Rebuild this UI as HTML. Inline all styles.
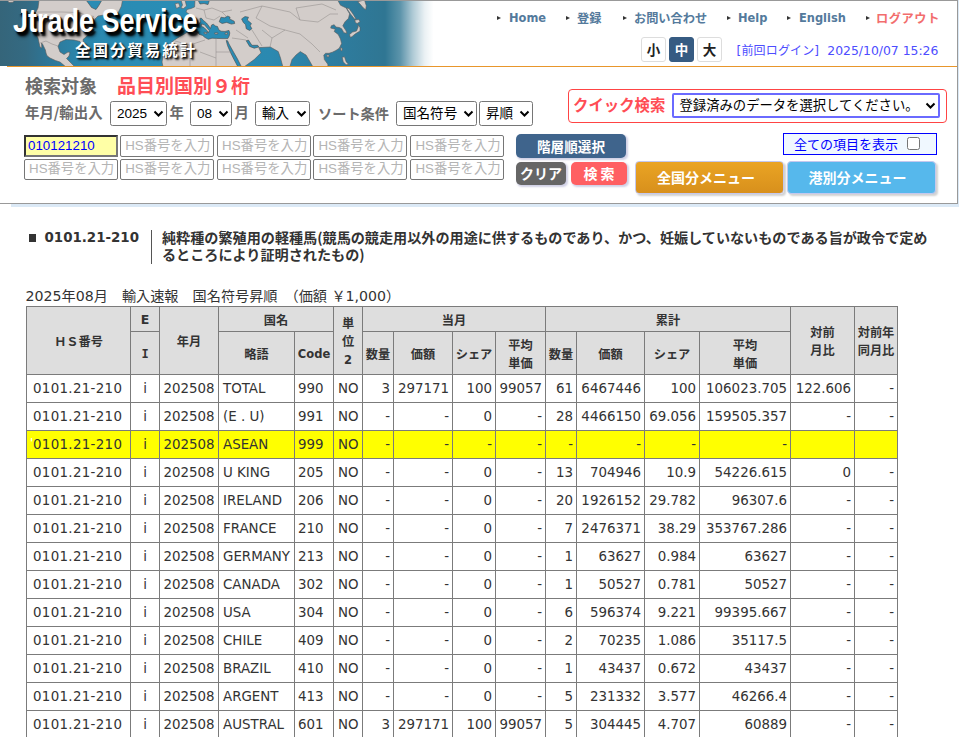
<!DOCTYPE html>
<html lang="ja">
<head>
<meta charset="utf-8">
<title>Jtrade Service 全国分貿易統計</title>
<style>
html,body{margin:0;padding:0;}
body{width:959px;height:737px;overflow:hidden;position:relative;background:#fff;
 font-family:"DejaVu Sans","Noto Sans CJK JP",sans-serif;font-size:14px;color:#333;}
.abs{position:absolute;}
#bluebg{left:11px;top:0;width:948px;height:207px;background:#dbe9f6;}
#hdr{left:0;top:0;width:957px;height:202px;background:#fff;border-top:1px solid #999;border-right:1px solid #999;border-bottom:1px solid #999;}
#banner{left:0;top:1px;width:436px;height:65px;overflow:hidden;}
#oline{left:7px;top:66px;width:950px;height:1px;background:#e8962c;}
.logo1{left:13px;top:.8px;font-family:"Liberation Sans",sans-serif;font-weight:bold;font-size:33px;line-height:38px;color:#fff;white-space:nowrap;
 transform:scaleX(.818);transform-origin:0 0;text-shadow:2px 2px 1px rgba(0,0,0,.9),3.5px 3.5px 2px rgba(0,0,0,.9),4.5px 4.5px 4px rgba(0,0,0,.55);letter-spacing:0;}
.logo2{left:75px;top:37.5px;font-family:"Noto Sans CJK JP",sans-serif;font-weight:bold;font-size:15.5px;line-height:20px;color:#fff;white-space:nowrap;letter-spacing:1.95px;
 text-shadow:2px 2px 2px rgba(0,0,0,.9),1px 1px 1px rgba(0,0,0,.7);}
.nav{top:10px;height:16px;line-height:16px;font-size:12px;font-weight:bold;color:#547a9c;white-space:nowrap;}
.nav.lat{font-family:"DejaVu Sans Condensed","DejaVu Sans",sans-serif;font-size:12.7px;}
.nav.jp{font-family:"Noto Sans CJK JP",sans-serif;font-size:12.2px;}
.tri{width:0;height:0;border-left:4px solid #333;border-top:2.5px solid transparent;border-bottom:2.5px solid transparent;top:15.6px;}
.fs{top:37px;width:23px;height:23px;border:1px solid #ddd;border-radius:3px;background:#fff;color:#222;font-family:"Noto Sans CJK JP",sans-serif;font-weight:bold;font-size:13.5px;line-height:23px;text-align:center;}
.fs.on{background:#365b82;border-color:#365b82;color:#fff;}
.login{left:736.6px;top:42.3px;font-size:12px;line-height:18px;color:#4d4dff;white-space:nowrap;font-family:"DejaVu Sans","Noto Sans CJK JP",sans-serif;}
.lbl{font-family:"Noto Sans CJK JP",sans-serif;font-weight:bold;color:#6b6b6b;white-space:nowrap;}
.sel{box-sizing:border-box;height:25px;top:101px;border:1px solid #767676;border-radius:2.5px;background:#fff;font-family:"Liberation Sans","Noto Sans CJK JP",sans-serif;font-size:13.55px;line-height:23px;color:#000;white-space:nowrap;padding-left:6px;}
.sel svg{position:absolute;right:2.5px;top:7.5px;}
.inp{box-sizing:border-box;width:94px;height:22px;border:1px solid #767676;border-radius:2px;background:#fff;font-family:"Liberation Sans","Noto Sans CJK JP",sans-serif;font-size:13.33px;line-height:19px;color:#b4b4b4;padding-left:4px;white-space:nowrap;overflow:hidden;}
.inp.on{border:2px solid #333;border-right-color:#777;border-bottom-color:#777;border-radius:0;background:#ffffa6;color:#0000ff;padding-left:2px;line-height:17px;}
.btn{box-sizing:border-box;border-radius:5px;color:#fff;font-family:"Noto Sans CJK JP",sans-serif;font-weight:bold;font-size:14px;text-align:center;white-space:nowrap;box-shadow:1.5px 1.5px 2px rgba(120,120,180,.35);}
.big{box-sizing:border-box;top:161px;width:149px;height:33px;padding-right:7px;border:1px solid #c4c8ee;border-radius:4px;color:#fff;font-family:"Noto Sans CJK JP",sans-serif;font-weight:bold;font-size:14px;line-height:31px;text-align:center;box-shadow:2px 2px 2px rgba(0,0,0,.18);}
#title{left:28px;top:228px;}
table{border-collapse:collapse;table-layout:fixed;position:absolute;left:26px;top:306px;width:872px;}
th,td{border:1px solid #7b7b7b;padding:0;overflow:hidden;white-space:nowrap;}
th{background:#dedede;font-family:"Noto Sans CJK JP",sans-serif;font-weight:bold;font-size:12.2px;line-height:18px;color:#333;text-align:center;padding-top:1px;}
th .lt{font-family:"DejaVu Sans",sans-serif;font-size:11.5px;}
th .lt.e{font-size:12.5px;}
th .sf{font-family:"DejaVu Sans Mono",monospace;font-size:12px;}
td{height:27px;font-family:"DejaVu Sans",sans-serif;font-size:13.4px;line-height:27px;text-align:right;padding-right:3px;color:#333;background:#fff;}
td.l{text-align:left;padding-left:4px;padding-right:0;}
td.c{text-align:center;padding:0;}
td.cd{padding-left:3px;}
td.hs{padding-left:6px;letter-spacing:.32px;position:relative;}
td.hs .ap{position:absolute;left:3px;top:-1px;color:#fff;letter-spacing:0;font-size:12px;}
tr.hl td{background:#ffff00;}
</style>
</head>
<body>
<div class="abs" id="bluebg"></div>
<div class="abs" id="hdr"></div>
<div class="abs" id="banner">
<!--MAPSTART-->
<svg class="abs" style="left:0;top:0" width="436" height="65" viewBox="0 1 436 65">
<defs>
<linearGradient id="sea" x1="0" y1="0" x2="436" y2="0" gradientUnits="userSpaceOnUse">
<stop offset="0" stop-color="#35657a"/><stop offset=".06" stop-color="#346a82"/><stop offset=".105" stop-color="#2e7595"/><stop offset=".17" stop-color="#2b83a8"/><stop offset=".26" stop-color="#2a8bb3"/><stop offset=".38" stop-color="#2a8db5"/><stop offset=".62" stop-color="#2b89b0"/><stop offset=".78" stop-color="#2e7c9e"/><stop offset=".88" stop-color="#2f7693"/><stop offset="1" stop-color="#2f7693"/>
</linearGradient>
<linearGradient id="fade" x1="385" y1="0" x2="436" y2="0" gradientUnits="userSpaceOnUse">
<stop offset="0" stop-color="#fff" stop-opacity="0"/><stop offset=".3" stop-color="#fff" stop-opacity=".22"/><stop offset=".55" stop-color="#fff" stop-opacity=".62"/><stop offset=".78" stop-color="#fff" stop-opacity=".9"/><stop offset=".95" stop-color="#fff" stop-opacity="1"/><stop offset="1" stop-color="#fff" stop-opacity="1"/>
</linearGradient>
</defs>
<rect x="0" y="1" width="436" height="65" fill="url(#sea)"/>
<g fill="#d3cdca" stroke="#5a5a5a" stroke-width=".6" stroke-linejoin="round">
<!-- North America -->
<path d="M39 0 L122.5 0 L121.5 6 L118 13 L112 15.5 L104 15 L98 16 L95 19 L93.5 25 L91 31 L87 36 L83 39.5 L84 45 L82.5 47 L80 41.5 L74 40 L66 39.5 L60 42 L58 46.5 L60 52 L64 54.5 L68 52 L70 52.5 L69 56 L66.5 58.5 L70 62 L75 67 L66 67 L60 62 L55.4 60.5 L50 58 L47 55.7 L46 53 L45.4 50 L42.5 44 L41.5 43 L41.8 48 L40 47 L38 38 L36 34 L35 30 L34 22 L35 14 L38 8 Z"/>
<path d="M7 0 L15 0 L13 2.2 L9 2.5 Z"/>
<!-- Cuba -->
<path d="M80 50 L86 49.5 L91 52 L86 52 Z"/>
<!-- Ireland / UK -->
<path d="M175 3.8 L178.5 3 L180 6.5 L176.5 8.5 Z"/>
<path d="M181 0 L185 0 L186.5 6 L183.5 8.5 L181 8 L182.5 5 Z"/>
<!-- Eurasia + Africa -->
<path d="M195 0 L337.6 0 L340.5 5.2 L346.2 8 L349.6 13.8 L348.5 18.3 L345 21.8 L342.8 25.8 L346.2 31 L346.8 33.3 L343.9 32.7 L341.6 28.7 L339.3 27.5 L335.9 27 L334.2 24.7 L331.3 25.8 L330.7 28.1 L335.3 29.2 L334.2 31.5 L338.2 34.4 L340.5 39 L341.6 43.6 L339.3 48.2 L335.9 50.5 L332.4 52.2 L329 53.3 L325.6 53.3 L323.8 55 L324.4 59.6 L327.8 64.2 L328 67 L313 67 L309 60 L306 55 L300.3 51.6 L296 55 L292 59.6 L289.8 67 L282.9 67 L280.5 58 L278.3 51.6 L270.3 47 L258.8 47.6 L261.1 52.8 L254.2 59.6 L243.9 67 L163 67 L162 62 L163 56 L164.5 51.6 L167 47 L170 43.6 L174.5 40 L179.5 36.7 L186 33 L191 30 L189.5 28 L187 27 L186 21 L190 18.5 L190.5 15 L186 12 L187 9.5 L191 8.5 L194.6 7 Z"/>
<!-- Sakhalin, Hokkaido, Honshu, Taiwan, Hainan, Luzon -->
<path d="M357.7 1.7 L364.5 0 L366.3 5.7 L365.7 9.7 L363.4 8 L360 4 Z"/>
<path d="M346.5 8 L349 8.5 L353 14 L356 19 L354.5 19 L350.5 14 Z"/>
<path d="M354.8 20 L358.8 19.5 L360 21.8 L357.1 23.5 L355.4 22.4 Z"/>
<path d="M349.6 34.4 L352.5 32.1 L356.5 31 L358.2 27 L357.7 24.7 L360 27.5 L360 31 L355.4 33.8 L351.9 36.7 L350.2 37.3 Z"/>
<path d="M340.5 47.6 L342.2 48.2 L342.2 50.5 L341 51 Z"/>
<path d="M326.7 55 L329 55 L329 56.8 L326.9 56.8 Z"/>
<path d="M342.2 57.3 L344.5 56.8 L346.2 61.9 L348.5 64.2 L346.2 64.8 L343.3 61.9 Z"/>
</g>
<g fill="#2a8cb4" stroke="#4a4a4a" stroke-width=".6" stroke-linejoin="round">
<path d="M86 0 L89 4 L91.5 7.5 L96 9.5 L98.5 6 L102 0 Z"/>
<!-- Baltic, Mediterranean, Black Sea, Caspian, Red Sea, Persian Gulf -->
<path d="M198 0 L209.5 0 L208 4.6 L204 3.5 L200 4 Z"/>
<path d="M189.5 28.5 L192 25.5 L196 24 L199 24.5 L200.5 21.5 L199.8 18.6 L201.2 18 L203.5 20.5 L206.5 23 L208.8 26 L210.5 28.5 L211.5 25 L213.2 24.2 L215.5 26 L217.5 26.5 L218.8 29.8 L221 31.2 L225 31.4 L229 30.4 L229.8 33 L229.2 36 L227.8 38.6 L222 38.6 L216.4 38.4 L212 38.2 L208.3 39.3 L205 37.5 L202.6 35.5 L199 34.2 L198 32.2 L195 31.5 L191.5 30.5 Z"/>
<path d="M201.5 24 L204.5 24.8 L207.5 28.5 L209.3 30.6 L208.3 32.8 L206.8 30.3 L204 27.5 L201.3 26.3 Z" fill="#d3cdca"/>
<path d="M204 32.3 L207 32.5 L206.5 34 L204.3 33.6 Z" fill="#d3cdca"/><path d="M214.5 33 L217.5 32.7 L218 33.8 L215 34.2 Z" fill="#d3cdca"/><path d="M225 33 L227.5 32.7 L227.3 34.2 L225.2 34.3 Z" fill="#d3cdca"/>
<path d="M219.2 21.8 L221 17.2 L224.4 17.8 L227.8 16 L230.1 17.2 L229.6 18.9 L234.2 21.2 L234.7 23.5 L231.3 24.1 L226.7 22.4 L222.1 23.5 Z"/>
<path d="M241.6 18.9 L245 16.6 L248.5 17.2 L247.3 20 L251.4 23.5 L250.2 25.8 L251.9 28.7 L249.6 30.4 L246.2 28.7 L245.6 24.7 L243.3 22.4 Z"/>
<path d="M226.2 40.5 L227.6 40.8 L229 44 L233.5 52 L237.5 59 L241.5 67 L238 67 L234 59.5 L230.5 52.5 L227.5 45.5 Z"/>
<path d="M246.2 40.7 L248.5 40.1 L251.9 45.3 L257.7 45.3 L258.8 47 L254.2 48.2 L249.6 46.4 Z"/>
</g>
<g fill="none" stroke="#8a8684" stroke-width=".5">
<!-- a few country borders -->
<path d="M37 12 L62 12 L78 12.5 L86 15 L94 16.5"/><path d="M40 43 L46 41 L52 44 L58 46"/>
<path d="M175 41 L190 45 L190 66"/><path d="M190 45 L205 40"/><path d="M216 38.5 L216 66"/><path d="M216 52 L232 52"/><path d="M200 52 L216 58"/>
<path d="M232 38 L246 40"/><path d="M236 30 L248 38"/><path d="M252 30 L262 46"/><path d="M262 30 L272 38 L270 47"/><path d="M272 38 L285 30 L300 34 L312 44 L320 52"/>
<path d="M240 12 L262 6 L290 12 L300 20 L318 22 L330 14 L338 14"/><path d="M262 6 L256 18 L270 26 L285 30"/><path d="M300 20 L296 8 L322 4 L336 10"/>
<path d="M196 8 L204 10 L212 8 L222 12 L232 10"/><path d="M204 10 L206 18 L214 20 L220 16"/><path d="M222 12 L226 16"/>
</g>
<rect x="385" y="1" width="51" height="65" fill="url(#fade)"/>
</svg>
<!--MAPEND-->
<div class="abs logo1"><span style="display:inline-block;clip-path:polygon(9.9px -5px,60px -5px,60px 60px,-10px 60px,-10px 12.5px,9.9px 12.5px)">J</span><span style="position:relative;z-index:2">trade Service</span></div>
<div class="abs logo2">全国分貿易統計</div>
</div>
<div class="abs" id="oline"></div>

<!-- top navigation -->
<div class="abs tri" style="left:497px"></div><div class="abs nav lat" style="left:509px">Home</div>
<div class="abs tri" style="left:566px"></div><div class="abs nav jp" style="left:577px">登録</div>
<div class="abs tri" style="left:623px"></div><div class="abs nav jp" style="left:634px">お問い合わせ</div>
<div class="abs tri" style="left:727px"></div><div class="abs nav lat" style="left:738px">Help</div>
<div class="abs tri" style="left:787px"></div><div class="abs nav lat" style="left:799px">English</div>
<div class="abs tri" style="left:866px"></div><div class="abs nav jp" style="left:876px;color:#f26d6d;letter-spacing:.6px">ログアウト</div>

<div class="abs fs" style="left:641px">小</div>
<div class="abs fs on" style="left:669px">中</div>
<div class="abs fs" style="left:697px">大</div>
<div class="abs login" style="letter-spacing:.15px">[前回ログイン]</div><div class="abs login" style="left:827.3px;font-size:12.4px;letter-spacing:0">2025/10/07 15:26</div>

<!-- search conditions -->
<div class="abs lbl" style="left:25px;top:72px;font-size:18px;line-height:26px">検索対象</div>
<div class="abs lbl" style="left:117px;top:72px;font-size:19px;line-height:26px;color:#ff4d55">品目別国別９桁</div>
<div class="abs lbl" style="left:25px;top:102px;font-size:14.4px;line-height:20px">年月/輸出入</div>
<div class="abs sel" style="left:110px;width:57px">2025<svg width="11" height="8" viewBox="0 0 11 8"><path d="M1.5 1.5 L5.5 5.5 L9.5 1.5" fill="none" stroke="#000" stroke-width="2"/></svg></div>
<div class="abs lbl" style="left:169.5px;top:102px;font-size:14.4px;line-height:20px">年</div>
<div class="abs sel" style="left:190px;width:42px">08<svg width="11" height="8" viewBox="0 0 11 8"><path d="M1.5 1.5 L5.5 5.5 L9.5 1.5" fill="none" stroke="#000" stroke-width="2"/></svg></div>
<div class="abs lbl" style="left:234.5px;top:102px;font-size:14.4px;line-height:20px">月</div>
<div class="abs sel" style="left:255px;width:55px">輸入<svg width="11" height="8" viewBox="0 0 11 8"><path d="M1.5 1.5 L5.5 5.5 L9.5 1.5" fill="none" stroke="#000" stroke-width="2"/></svg></div>
<div class="abs lbl" style="left:318px;top:102.5px;font-size:14.2px;line-height:20px">ソート条件</div>
<div class="abs sel" style="left:396px;width:81px">国名符号<svg width="11" height="8" viewBox="0 0 11 8"><path d="M1.5 1.5 L5.5 5.5 L9.5 1.5" fill="none" stroke="#000" stroke-width="2"/></svg></div>
<div class="abs sel" style="left:479px;width:54px">昇順<svg width="11" height="8" viewBox="0 0 11 8"><path d="M1.5 1.5 L5.5 5.5 L9.5 1.5" fill="none" stroke="#000" stroke-width="2"/></svg></div>

<!-- quick search -->
<div class="abs" style="left:568px;top:89px;width:377px;height:32px;border:1px solid #ff4444;border-radius:4px;background:#fff"></div>
<div class="abs lbl" style="left:573px;top:93px;font-size:15.4px;line-height:22px;color:#ff4d55">クイック検索</div>
<div class="abs sel" style="left:672px;top:93px;width:268px;border:2px solid #6a6aff;border-radius:2px;line-height:21px;padding-left:5.5px;font-size:13.33px">登録済みのデータを選択してください。<svg style="top:7px;right:2.5px" width="11" height="8" viewBox="0 0 11 8"><path d="M1.5 1.5 L5.5 5.5 L9.5 1.5" fill="none" stroke="#000" stroke-width="2"/></svg></div>

<!-- HS inputs -->
<div class="abs inp on" style="left:24px;top:135px">010121210</div>
<div class="abs inp" style="left:120.2px;top:135px">HS番号を入力</div>
<div class="abs inp" style="left:217.1px;top:135px">HS番号を入力</div>
<div class="abs inp" style="left:313.4px;top:135px">HS番号を入力</div>
<div class="abs inp" style="left:410.4px;top:135px">HS番号を入力</div>
<div class="abs inp" style="left:24px;top:159px;height:21px;line-height:18px">HS番号を入力</div>
<div class="abs inp" style="left:120.2px;top:159px;height:21px;line-height:18px">HS番号を入力</div>
<div class="abs inp" style="left:217.1px;top:159px;height:21px;line-height:18px">HS番号を入力</div>
<div class="abs inp" style="left:313.4px;top:159px;height:21px;line-height:18px">HS番号を入力</div>
<div class="abs inp" style="left:410.4px;top:159px;height:21px;line-height:18px">HS番号を入力</div>

<!-- buttons -->
<div class="abs btn" style="left:516px;top:134px;width:110px;height:24px;line-height:24px;background:#3f648c;font-size:13.6px">階層順選択</div>
<div class="abs btn" style="left:516px;top:162px;width:50px;height:23px;line-height:23px;background:#666">クリア</div>
<div class="abs btn" style="left:571px;top:162px;width:56px;height:23px;line-height:23px;background:#ff5f62">検 索</div>
<div class="abs" style="left:783px;top:133px;width:152px;height:20px;border:1px solid #0000ff;background:#f0f8ff;"></div>
<div class="abs" style="left:794px;top:134px;font-family:'Noto Sans CJK JP',sans-serif;font-size:13px;line-height:20px;color:#0000ff;white-space:nowrap">全ての項目を表示</div>
<div class="abs" style="left:907px;top:137px;width:11px;height:11px;border:1px solid #767676;border-radius:2.5px;background:#fff"></div>
<div class="abs big" style="left:635px;background:linear-gradient(#eaa424,#d8901c)">全国分メニュー</div>
<div class="abs big" style="left:786.6px;background:#56b8ec">港別分メニュー</div>

<!-- title -->
<div class="abs" style="left:28.6px;top:234.4px;width:7.8px;height:7.8px;background:#333"></div>
<div class="abs" style="left:44.5px;top:228px;font-family:'DejaVu Sans',sans-serif;font-weight:bold;font-size:13.4px;line-height:20px;color:#333;white-space:nowrap">0101.21-210</div>
<div class="abs" style="left:151px;top:230px;width:1px;height:34px;background:#555"></div>
<div class="abs" style="left:162px;top:229px;width:780px;font-family:'Noto Sans CJK JP',sans-serif;font-weight:bold;font-size:14.11px;line-height:17px;color:#333">純粋種の繁殖用の軽種馬(競馬の競走用以外の用途に供するものであり、かつ、妊娠していないものである旨が政令で定め<br>るところにより証明されたもの)</div>
<div class="abs" style="left:25.5px;top:285.5px;font-size:14.15px;line-height:20px;color:#333;white-space:nowrap;font-family:'DejaVu Sans','Noto Sans CJK JP',sans-serif"><span class="d">2025</span>年<span class="d">08</span>月　輸入速報　国名符号昇順　（価額 ￥<span class="d">1,000</span>）</div>

<table>
<colgroup><col style="width:104px"><col style="width:29px"><col style="width:59px"><col style="width:76px"><col style="width:39px"><col style="width:29px"><col style="width:31px"><col style="width:59px"><col style="width:43px"><col style="width:50px"><col style="width:31px"><col style="width:68px"><col style="width:55px"><col style="width:91px"><col style="width:64px"><col style="width:43px"></colgroup>
<thead>
<tr style="height:25px"><th rowspan="2">ＨＳ番号</th><th><span class="lt e">E</span></th><th rowspan="2">年月</th><th colspan="2">国名</th><th rowspan="2">単<br>位<br><span class="lt">2</span></th><th colspan="4">当月</th><th colspan="4">累計</th><th rowspan="2">対前<br>月比</th><th rowspan="2">対前年<br>同月比</th></tr>
<tr style="height:43px"><th><span class="sf">I</span></th><th>略語</th><th><span class="lt">Code</span></th><th>数量</th><th>価額</th><th>シェア</th><th>平均<br>単価</th><th>数量</th><th>価額</th><th>シェア</th><th>平均<br>単価</th></tr>
</thead>
<tbody>
<tr><td class="l hs"><span class="ap">&#39;</span>0101.21-210</td><td class="c">i</td><td class="c ym">202508</td><td class="l">TOTAL</td><td class="l cd">990</td><td class="l">NO</td><td>3</td><td>297171</td><td>100</td><td>99057</td><td>61</td><td>6467446</td><td>100</td><td>106023.705</td><td>122.606</td><td>-</td></tr>
<tr><td class="l hs"><span class="ap">&#39;</span>0101.21-210</td><td class="c">i</td><td class="c ym">202508</td><td class="l">(E . U)</td><td class="l cd">991</td><td class="l">NO</td><td>-</td><td>-</td><td>0</td><td>-</td><td>28</td><td>4466150</td><td>69.056</td><td>159505.357</td><td>-</td><td>-</td></tr>
<tr class="hl"><td class="l hs"><span class="ap">&#39;</span>0101.21-210</td><td class="c">i</td><td class="c ym">202508</td><td class="l">ASEAN</td><td class="l cd">999</td><td class="l">NO</td><td>-</td><td>-</td><td>-</td><td>-</td><td>-</td><td>-</td><td>-</td><td>-</td><td></td><td></td></tr>
<tr><td class="l hs"><span class="ap">&#39;</span>0101.21-210</td><td class="c">i</td><td class="c ym">202508</td><td class="l">U KING</td><td class="l cd">205</td><td class="l">NO</td><td>-</td><td>-</td><td>0</td><td>-</td><td>13</td><td>704946</td><td>10.9</td><td>54226.615</td><td>0</td><td>-</td></tr>
<tr><td class="l hs"><span class="ap">&#39;</span>0101.21-210</td><td class="c">i</td><td class="c ym">202508</td><td class="l">IRELAND</td><td class="l cd">206</td><td class="l">NO</td><td>-</td><td>-</td><td>0</td><td>-</td><td>20</td><td>1926152</td><td>29.782</td><td>96307.6</td><td>-</td><td>-</td></tr>
<tr><td class="l hs"><span class="ap">&#39;</span>0101.21-210</td><td class="c">i</td><td class="c ym">202508</td><td class="l">FRANCE</td><td class="l cd">210</td><td class="l">NO</td><td>-</td><td>-</td><td>0</td><td>-</td><td>7</td><td>2476371</td><td>38.29</td><td>353767.286</td><td>-</td><td>-</td></tr>
<tr><td class="l hs"><span class="ap">&#39;</span>0101.21-210</td><td class="c">i</td><td class="c ym">202508</td><td class="l">GERMANY</td><td class="l cd">213</td><td class="l">NO</td><td>-</td><td>-</td><td>0</td><td>-</td><td>1</td><td>63627</td><td>0.984</td><td>63627</td><td>-</td><td>-</td></tr>
<tr><td class="l hs"><span class="ap">&#39;</span>0101.21-210</td><td class="c">i</td><td class="c ym">202508</td><td class="l">CANADA</td><td class="l cd">302</td><td class="l">NO</td><td>-</td><td>-</td><td>0</td><td>-</td><td>1</td><td>50527</td><td>0.781</td><td>50527</td><td>-</td><td>-</td></tr>
<tr><td class="l hs"><span class="ap">&#39;</span>0101.21-210</td><td class="c">i</td><td class="c ym">202508</td><td class="l">USA</td><td class="l cd">304</td><td class="l">NO</td><td>-</td><td>-</td><td>0</td><td>-</td><td>6</td><td>596374</td><td>9.221</td><td>99395.667</td><td>-</td><td>-</td></tr>
<tr><td class="l hs"><span class="ap">&#39;</span>0101.21-210</td><td class="c">i</td><td class="c ym">202508</td><td class="l">CHILE</td><td class="l cd">409</td><td class="l">NO</td><td>-</td><td>-</td><td>0</td><td>-</td><td>2</td><td>70235</td><td>1.086</td><td>35117.5</td><td>-</td><td>-</td></tr>
<tr><td class="l hs"><span class="ap">&#39;</span>0101.21-210</td><td class="c">i</td><td class="c ym">202508</td><td class="l">BRAZIL</td><td class="l cd">410</td><td class="l">NO</td><td>-</td><td>-</td><td>0</td><td>-</td><td>1</td><td>43437</td><td>0.672</td><td>43437</td><td>-</td><td>-</td></tr>
<tr><td class="l hs"><span class="ap">&#39;</span>0101.21-210</td><td class="c">i</td><td class="c ym">202508</td><td class="l">ARGENT</td><td class="l cd">413</td><td class="l">NO</td><td>-</td><td>-</td><td>0</td><td>-</td><td>5</td><td>231332</td><td>3.577</td><td>46266.4</td><td>-</td><td>-</td></tr>
<tr><td class="l hs"><span class="ap">&#39;</span>0101.21-210</td><td class="c">i</td><td class="c ym">202508</td><td class="l">AUSTRAL</td><td class="l cd">601</td><td class="l">NO</td><td>3</td><td>297171</td><td>100</td><td>99057</td><td>5</td><td>304445</td><td>4.707</td><td>60889</td><td>-</td><td>-</td></tr>
</tbody>
</table>
</body>
</html>
